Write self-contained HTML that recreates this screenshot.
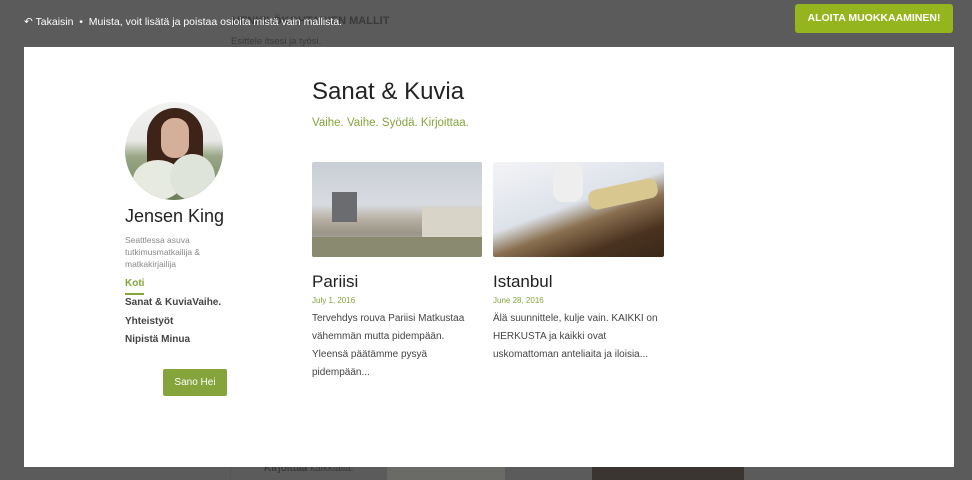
<!DOCTYPE html>
<html><head><meta charset="utf-8"><style>
*{margin:0;padding:0;box-sizing:border-box}
body{width:972px;height:480px;overflow:hidden;background:#5b5b5b;font-family:"Liberation Sans",sans-serif;position:relative}
.bgt{position:absolute;color:#3a3a3a;font-weight:bold;font-size:12px}
.top{position:absolute;left:24px;top:16px;color:#fff;font-size:10.5px}
.btn{position:absolute;left:795px;top:4px;width:158px;height:29px;background:#94b51e;border-radius:3px;color:#fff;font-weight:bold;font-size:10.5px;text-align:center;line-height:29px}
.modal{position:absolute;left:24px;top:47px;width:930px;height:420px;background:#fff}
.a{position:absolute}
.av{left:101px;top:55px;width:98px;height:98px;border-radius:50%;overflow:hidden;background:linear-gradient(#f2f2f0 0,#e8e8e6 40%,#9aa888 55%,#6d7d5a 100%)}
.nav{font-size:10px;font-weight:bold;color:#444}
.post{font-size:10px;color:#444;line-height:18px}
</style></head><body>
<div class="bgt" style="left:232px;top:15px;font-size:11px">HENKILÖKOHTAINEN MALLIT</div>
<div class="bgt" style="left:231px;top:36px;font-weight:normal;font-size:9.5px">Esittele itsesi ja työsi.</div>
<div class="bgt" style="left:264px;top:463px;font-size:10px">Kirjoittaa <span style="font-weight:normal">kaikkialla.</span></div>
<div style="position:absolute;left:387px;top:467px;width:118px;height:13px;background:#6a6a66"></div>
<div style="position:absolute;left:592px;top:467px;width:152px;height:13px;background:#3a3530"></div>
<div style="position:absolute;left:230px;top:467px;width:1px;height:13px;background:#555"></div>
<div class="top">&#8630; Takaisin &nbsp;•&nbsp; Muista, voit lisätä ja poistaa osioita mistä vain mallista.</div>
<div class="btn">ALOITA MUOKKAAMINEN!</div>
<div class="modal">
 <div class="a av"><div style="position:absolute;left:22px;top:6px;width:56px;height:80px;border-radius:28px 28px 10px 10px;background:#3e2418"></div><div style="position:absolute;left:36px;top:16px;width:28px;height:40px;border-radius:13px;background:#d4b09a"></div><div style="position:absolute;left:8px;top:58px;width:50px;height:40px;border-radius:50%;background:#e6eae0"></div><div style="position:absolute;left:45px;top:52px;width:45px;height:46px;border-radius:50%;background:#dfe4da"></div></div>
 <div class="a" style="left:101px;top:159px;font-size:18px;color:#222">Jensen King</div>
 <div class="a" style="left:101px;top:187px;font-size:8.5px;color:#888;line-height:12px;width:105px">Seattlessa asuva tutkimusmatkailija &amp; matkakirjailija</div>
 <div class="a nav" style="left:101px;top:231px;color:#85a43c">Koti</div>
 <div class="a" style="left:101px;top:246px;width:19px;height:2px;background:#85a43c"></div>
 <div class="a nav" style="left:101px;top:250px">Sanat &amp; KuviaVaihe.</div>
 <div class="a nav" style="left:101px;top:269px">Yhteistyöt</div>
 <div class="a nav" style="left:101px;top:287px">Nipistä Minua</div>
 <div class="a" style="left:139px;top:322px;width:64px;height:27px;background:#85a43c;border-radius:2px;color:#fff;font-size:10px;text-align:center;line-height:27px">Sano Hei</div>
 <div class="a" style="left:288px;top:31px;font-size:24px;color:#222">Sanat &amp; Kuvia</div>
 <div class="a" style="left:288px;top:70px;font-size:11.5px;color:#85a43c">Vaihe. Vaihe. Syödä. Kirjoittaa.</div>
 <div class="a" style="left:288px;top:115px;width:170px;height:95px;border-radius:2px;overflow:hidden;background:linear-gradient(#c9ced6 0,#d8dbe0 45%,#b8b0a4 60%,#9a9588 75%,#aab0ae 85%,#7d7a68 100%)"><div style="position:absolute;left:20px;top:30px;width:25px;height:30px;background:#6a6c70"></div><div style="position:absolute;left:110px;top:45px;width:60px;height:30px;background:#d8d4c8"></div><div style="position:absolute;left:0;top:75px;width:170px;height:20px;background:#8a8a70"></div></div>
 <div class="a" style="left:469px;top:115px;width:171px;height:95px;border-radius:2px;overflow:hidden;background:linear-gradient(160deg,#f4f4f6 0,#dde2ea 45%,#8a7050 60%,#4a3220 80%,#3a2818 100%)"><div style="position:absolute;left:60px;top:0;width:30px;height:40px;background:#eee;border-radius:10px"></div><div style="position:absolute;left:95px;top:22px;width:70px;height:20px;background:#d8c890;transform:rotate(-12deg);border-radius:8px"></div></div>
 <div class="a" style="left:288px;top:225px;font-size:17px;color:#222">Pariisi</div>
 <div class="a" style="left:288px;top:249px;font-size:8px;color:#85a43c">July 1, 2016</div>
 <div class="a post" style="left:288px;top:263px;width:170px">Tervehdys rouva Pariisi Matkustaa vähemmän mutta pidempään. Yleensä päätämme pysyä pidempään...</div>
 <div class="a" style="left:469px;top:225px;font-size:17px;color:#222">Istanbul</div>
 <div class="a" style="left:469px;top:249px;font-size:8px;color:#85a43c">June 28, 2016</div>
 <div class="a post" style="left:469px;top:263px;width:172px">Älä suunnittele, kulje vain. KAIKKI on HERKUSTA ja kaikki ovat uskomattoman anteliaita ja iloisia...</div>
</div>
</body></html>
